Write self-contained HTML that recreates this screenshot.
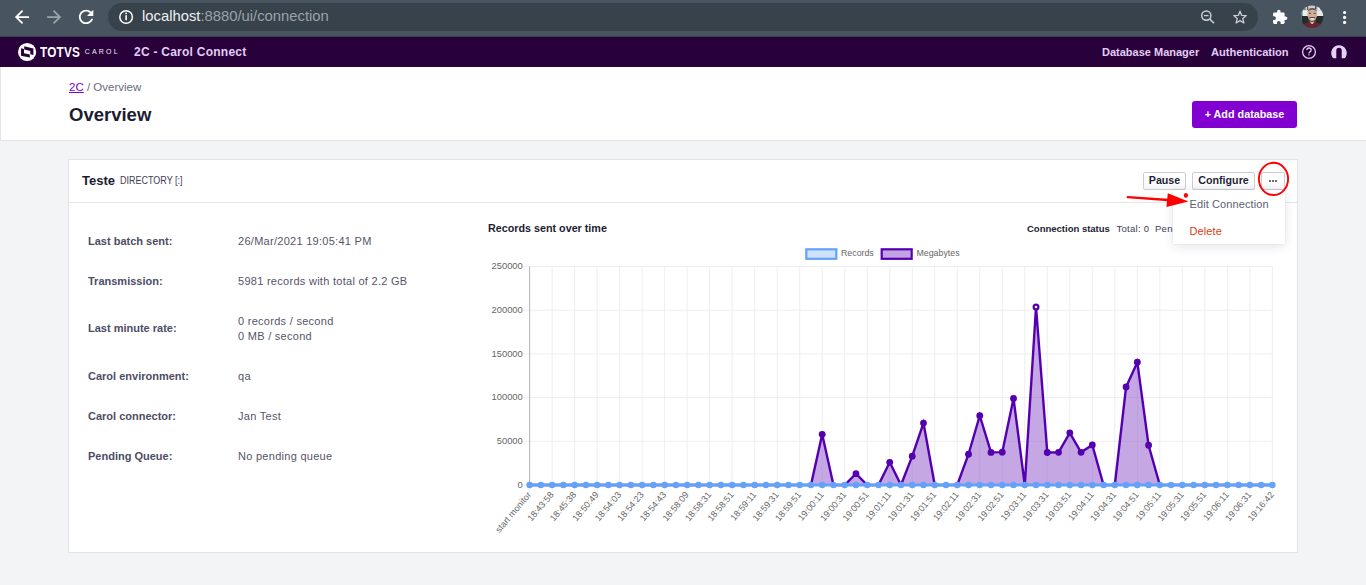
<!DOCTYPE html>
<html><head><meta charset="utf-8">
<style>
*{box-sizing:border-box;margin:0;padding:0}
html,body{width:1366px;height:585px;overflow:hidden;background:#f3f4f6;font-family:"Liberation Sans",sans-serif;position:relative}
.abs{position:absolute}
#chrome{left:0;top:0;width:1366px;height:37px;background:#485560;border-bottom:1px solid #34404a}
#pill{left:108px;top:3px;width:1150px;height:28px;border-radius:14px;background:#37424b}
#url{left:142px;top:7.8px;font-size:14.8px;color:#9aa3aa;white-space:nowrap;letter-spacing:0}
#url b{font-weight:normal;color:#eef0f1}
#nav{left:0;top:37px;width:1366px;height:30px;background:#28003a}
#header{left:0;top:67px;width:1366px;height:74px;background:#fff;border-bottom:1px solid #e3e3e8;border-left:1px solid #e3e3e8}
.crumb{left:69px;top:81px;font-size:11.5px;color:#6b6b80}
.crumb a{color:#7a00d6;text-decoration:underline}
.title{left:69px;top:104px;font-size:18.5px;font-weight:bold;color:#1c1c30}
.btn-add{left:1192px;top:101px;width:105px;height:27px;background:#8100d1;border-radius:3px;color:#fff;font-size:10.8px;font-weight:bold;text-align:center;line-height:27px}
#card{left:68px;top:159px;width:1230px;height:394px;background:#fff;border:1px solid #e3e3e8}
#cardhead{left:69px;top:160px;width:1228px;height:43px;border-bottom:1px solid #e6e6ea}
.name{left:82px;top:173px;font-size:13px;font-weight:bold;color:#1c1c30}
.dir{left:120px;top:175.1px;font-size:10px;color:#3d3d55;transform:scaleX(0.9);transform-origin:0 0;white-space:nowrap}
.btn{height:18px;border:1px solid #c9ced6;border-radius:2px;background:linear-gradient(#fff 60%,#f3f4f6);font-size:10.7px;font-weight:bold;color:#1f1f38;text-align:center;line-height:14px}
.lbl{left:88px;font-size:11px;font-weight:bold;color:#4d4d66}
.val{left:238px;font-size:11px;color:#555568;line-height:15px;letter-spacing:0.28px}
.chart{position:absolute;left:0;top:0}
.yl{font-family:"Liberation Sans",sans-serif;font-size:9.4px;fill:#666}
.xl{font-family:"Liberation Sans",sans-serif;font-size:9px;fill:#666}
.lg{font-family:"Liberation Sans",sans-serif;font-size:8.8px;fill:#666}
.ctitle{left:488px;top:222px;font-size:10.75px;font-weight:bold;color:#1c1c30}
.cstat{left:1027px;top:223px;font-size:9.5px;font-weight:bold;color:#1c1c30;white-space:nowrap}
.cstat span{font-weight:normal;color:#3d3d55;margin-left:6.5px;letter-spacing:0.3px}
#dd{left:1173px;top:190px;width:112px;height:54px;background:#fff;box-shadow:0 3px 10px rgba(30,40,70,0.11),0 0 2px rgba(30,40,70,0.08)}
.dd1{left:1189.5px;top:198px;font-size:11px;color:#5b6173;letter-spacing:0.1px}
.dd2{left:1189.5px;top:225px;font-size:11px;color:#e0380f;letter-spacing:0.1px}
.navt{top:46px;font-size:11.5px;font-weight:bold;color:#e3cdf5;white-space:nowrap}
</style></head><body>
<div class="abs" id="chrome"></div>
<div class="abs" id="pill"></div>
<div class="abs" id="url"><b>localhost</b>:8880/ui/connection</div>
<div class="abs" id="nav"></div>
<svg class="abs" style="left:0;top:0" width="1366" height="67" viewBox="0 0 1366 67">
<!-- back -->
<g transform="translate(14.9,10) scale(0.88) translate(-4,-4)"><path d="M20 11H7.83l5.59-5.59L12 4l-8 8 8 8 1.41-1.41L7.83 13H20v-2z" fill="#fff"/></g>
<g transform="translate(47.1,10) scale(0.88) translate(-4,-4)"><path d="M12 4l-1.41 1.41L16.17 11H4v2h12.17l-5.58 5.59L12 20l8-8z" fill="#9ba4ab"/></g>
<g transform="translate(78.9,9.7) scale(0.9) translate(-4,-4)"><path d="M17.65 6.35C16.2 4.9 14.21 4 12 4c-4.42 0-7.99 3.58-7.99 8s3.57 8 7.99 8c3.73 0 6.84-2.55 7.73-6h-2.08c-.82 2.33-3.04 4-5.65 4-3.31 0-6-2.69-6-6s2.69-6 6-6c1.66 0 3.14.69 4.22 1.78L13 11h7V4l-2.35 2.35z" fill="#fff"/></g>
<!-- info -->
<circle cx="126.1" cy="17" r="6.3" fill="none" stroke="#fff" stroke-width="1.5"/>
<rect x="125.3" y="15.2" width="1.6" height="5" fill="#fff"/>
<rect x="125.3" y="12.6" width="1.6" height="1.6" fill="#fff"/>
<!-- zoom out -->
<circle cx="1206.3" cy="15.6" r="4.6" fill="none" stroke="#c9cdd0" stroke-width="1.5"/>
<line x1="1209.6" y1="18.9" x2="1214" y2="23.3" stroke="#c9cdd0" stroke-width="1.6"/>
<line x1="1204" y1="15.6" x2="1208.6" y2="15.6" stroke="#c9cdd0" stroke-width="1.3"/>
<!-- star -->
<path d="M1240 11.2 L1241.7 15.4 L1246.3 15.6 L1242.8 18.6 L1243.9 23 L1240 20.6 L1236.1 23 L1237.2 18.6 L1233.7 15.6 L1238.3 15.4 Z" fill="none" stroke="#c9cdd0" stroke-width="1.3" stroke-linejoin="round"/>
<!-- puzzle -->
<g transform="translate(1271.7,9) scale(0.68)"><path d="M20.5 11H19V7c0-1.1-.9-2-2-2h-4V3.5C13 2.12 11.88 1 10.5 1S8 2.12 8 3.5V5H4c-1.1 0-1.99.9-1.99 2v3.8H3.5c1.49 0 2.7 1.21 2.7 2.7s-1.21 2.7-2.7 2.7H2V20c0 1.1.9 2 2 2h3.8v-1.5c0-1.49 1.21-2.7 2.7-2.7 1.49 0 2.7 1.21 2.7 2.7V22H17c1.1 0 2-.9 2-2v-4h1.5c1.38 0 2.5-1.12 2.5-2.5S21.88 11 20.5 11z" fill="#fff"/></g>
<!-- avatar -->
<defs><clipPath id="av"><circle cx="1312.05" cy="16.75" r="11.2"/></clipPath></defs>
<g clip-path="url(#av)">
<rect x="1300" y="5" width="25" height="24" fill="#3e4a4c"/>
<rect x="1300" y="5" width="25" height="6.5" fill="#c9d0cc"/>
<rect x="1304" y="5" width="1.5" height="5" fill="#4a8a7a"/><rect x="1307" y="5" width="1.2" height="5" fill="#a04050"/><rect x="1315" y="5" width="1.5" height="4" fill="#405080"/><rect x="1318" y="5" width="2" height="5" fill="#f0f0f0"/>
<rect x="1300" y="10.5" width="8.5" height="5.5" fill="#e9eeee"/>
<rect x="1316" y="10.5" width="9" height="5.5" fill="#e4e9e9"/>
<rect x="1300" y="11" width="2.5" height="12" fill="#4a7080"/>
<rect x="1302" y="16" width="6.5" height="9" fill="#262b2c"/>
<rect x="1316" y="16" width="8" height="9" fill="#24292a"/>
<rect x="1310.2" y="20" width="3.8" height="4" fill="#d8c4a8"/>
<ellipse cx="1312.3" cy="14.6" rx="4.8" ry="6.6" fill="#cfae98"/>
<path d="M1307.6 12.5 Q1307.5 8 1312.3 7.9 Q1317.1 8 1317 12.5 Q1316 9.7 1312.3 9.8 Q1308.6 9.7 1307.6 12.5 Z" fill="#6a5a50"/>
<rect x="1308.8" y="12.8" width="2.2" height="1" fill="#5a4a44"/><rect x="1313.6" y="12.8" width="2.2" height="1" fill="#5a4a44"/>
<path d="M1309 17.6 Q1312.3 16.4 1315.6 17.6 L1315.2 18.4 Q1312.3 17.6 1309.4 18.4 Z" fill="#4a3a34"/>
<ellipse cx="1312.3" cy="18.9" rx="2.2" ry="0.8" fill="#efe4de"/>
<path d="M1309 19.4 Q1312.3 22.6 1315.6 19.4 L1315.4 21 Q1312.3 23 1309.2 21 Z" fill="#5a4a40"/>
<path d="M1302 30 L1303.5 24.5 Q1306 22.3 1310.2 22.3 L1312.1 24.8 L1314.2 22.3 Q1318.6 22.3 1320.8 24.5 L1322 30 Z" fill="#6a2230"/>
</g>
<!-- menu dots -->
<circle cx="1344.6" cy="12.5" r="1.6" fill="#fff"/><circle cx="1344.6" cy="17.4" r="1.6" fill="#fff"/><circle cx="1344.6" cy="22.4" r="1.6" fill="#fff"/>
<!-- totvs logo -->
<circle cx="27.1" cy="52" r="9.1" fill="#fff"/>
<path d="M24.2 46.2 L33.4 48.4 L33.4 55 L30.3 54.3 L30.3 51 L24.2 49.5 Z" fill="#28003a"/>
<path d="M21 48.2 L24 48.9 L24 53.2 L29.8 54.5 L29.8 57.6 L21 55.8 Z" fill="#28003a"/>
<!-- help -->
<circle cx="1309" cy="52" r="6.4" fill="none" stroke="#e3cdf5" stroke-width="1.3"/>
<path d="M1306.9 50.1 Q1306.9 48 1309 48 Q1311.1 48 1311.1 50 Q1311.1 51.2 1309.9 51.8 Q1309 52.3 1309 53.4" fill="none" stroke="#e3cdf5" stroke-width="1.3"/>
<rect x="1308.3" y="54.3" width="1.4" height="1.1" fill="#e3cdf5"/>
<!-- user -->
<defs><clipPath id="uc"><rect x="1328" y="40" width="22" height="18.2"/></clipPath></defs>
<path clip-path="url(#uc)" fill-rule="evenodd" d="M1339 45.3 A7.8 7.8 0 1 1 1338.99 45.3 Z M1336.3 60 L1336.3 50.4 A2.7 2.7 0 0 1 1341.7 50.4 L1341.7 60 Z" fill="#e6d0f7"/>
</svg>
<div class="abs navt" style="left:40px;top:44.1px;font-size:14.5px;color:#fff;transform:scaleX(0.81);transform-origin:0 0;letter-spacing:0.3px">TOTVS</div>
<div class="abs navt" style="left:84.7px;top:48.2px;font-size:7px;font-weight:normal;color:#f4eef8;letter-spacing:2.2px">CAROL</div>
<div class="abs navt" style="left:134px;top:45.4px;font-size:12px;letter-spacing:0.25px">2C - Carol Connect</div>
<div class="abs navt" style="left:1102px;font-size:11px">Database Manager</div>
<div class="abs navt" style="left:1211px;font-size:11.1px">Authentication</div>
<div class="abs" id="header"></div>
<div class="abs crumb"><a>2C</a> / Overview</div>
<div class="abs title">Overview</div>
<div class="abs btn-add">+ Add database</div>
<div class="abs" id="card"></div>
<div class="abs" id="cardhead"></div>
<div class="abs name">Teste</div>
<div class="abs dir">DIRECTORY [:]</div>
<div class="abs btn" style="left:1143px;top:172px;width:43px">Pause</div>
<div class="abs btn" style="left:1192px;top:172px;width:63px">Configure</div>
<div class="abs btn" style="left:1261px;top:172px;width:24px"></div>
<div class="abs" style="left:1269.2px;top:179.8px;width:2px;height:2px;background:#6e6e78"></div><div class="abs" style="left:1272.2px;top:179.8px;width:2px;height:2px;background:#6e6e78"></div><div class="abs" style="left:1275.2px;top:179.8px;width:2px;height:2px;background:#6e6e78"></div>
<div class="abs lbl" style="top:235px">Last batch sent:</div>
<div class="abs val" style="top:234px">26/Mar/2021 19:05:41 PM</div>
<div class="abs lbl" style="top:275px">Transmission:</div>
<div class="abs val" style="top:274px">5981 records with total of 2.2 GB</div>
<div class="abs lbl" style="top:322px">Last minute rate:</div>
<div class="abs val" style="top:314px">0 records / second<br>0 MB / second</div>
<div class="abs lbl" style="top:370px">Carol environment:</div>
<div class="abs val" style="top:369px">qa</div>
<div class="abs lbl" style="top:410px">Carol connector:</div>
<div class="abs val" style="top:409px">Jan Test</div>
<div class="abs lbl" style="top:450px">Pending Queue:</div>
<div class="abs val" style="top:449px">No pending queue</div>
<div class="abs ctitle">Records sent over time</div>
<div class="abs cstat">Connection status<span>Total: 0</span><span style="margin-left:5.5px">Pending</span></div>
<svg class="chart" width="1366" height="585" viewBox="0 0 1366 585">
<line x1="522.5" y1="485.00" x2="1272.86" y2="485.00" stroke="#eeeeee" stroke-width="1"/>
<text x="522.8" y="487.80" text-anchor="end" class="yl">0</text>
<line x1="522.5" y1="441.30" x2="1272.86" y2="441.30" stroke="#eeeeee" stroke-width="1"/>
<text x="522.8" y="444.10" text-anchor="end" class="yl">50000</text>
<line x1="522.5" y1="397.60" x2="1272.86" y2="397.60" stroke="#eeeeee" stroke-width="1"/>
<text x="522.8" y="400.40" text-anchor="end" class="yl">100000</text>
<line x1="522.5" y1="353.90" x2="1272.86" y2="353.90" stroke="#eeeeee" stroke-width="1"/>
<text x="522.8" y="356.70" text-anchor="end" class="yl">150000</text>
<line x1="522.5" y1="310.20" x2="1272.86" y2="310.20" stroke="#eeeeee" stroke-width="1"/>
<text x="522.8" y="313.00" text-anchor="end" class="yl">200000</text>
<line x1="522.5" y1="266.50" x2="1272.86" y2="266.50" stroke="#eeeeee" stroke-width="1"/>
<text x="522.8" y="269.30" text-anchor="end" class="yl">250000</text>
<line x1="529.60" y1="266.50" x2="529.60" y2="485.0" stroke="#b4b4b4" stroke-width="1"/>
<line x1="529.60" y1="485.0" x2="529.60" y2="492.5" stroke="#f2f2f2" stroke-width="1"/>
<line x1="552.11" y1="266.50" x2="552.11" y2="485.0" stroke="#eeeeee" stroke-width="1"/>
<line x1="552.11" y1="485.0" x2="552.11" y2="492.5" stroke="#f2f2f2" stroke-width="1"/>
<line x1="574.62" y1="266.50" x2="574.62" y2="485.0" stroke="#eeeeee" stroke-width="1"/>
<line x1="574.62" y1="485.0" x2="574.62" y2="492.5" stroke="#f2f2f2" stroke-width="1"/>
<line x1="597.12" y1="266.50" x2="597.12" y2="485.0" stroke="#eeeeee" stroke-width="1"/>
<line x1="597.12" y1="485.0" x2="597.12" y2="492.5" stroke="#f2f2f2" stroke-width="1"/>
<line x1="619.63" y1="266.50" x2="619.63" y2="485.0" stroke="#eeeeee" stroke-width="1"/>
<line x1="619.63" y1="485.0" x2="619.63" y2="492.5" stroke="#f2f2f2" stroke-width="1"/>
<line x1="642.14" y1="266.50" x2="642.14" y2="485.0" stroke="#eeeeee" stroke-width="1"/>
<line x1="642.14" y1="485.0" x2="642.14" y2="492.5" stroke="#f2f2f2" stroke-width="1"/>
<line x1="664.65" y1="266.50" x2="664.65" y2="485.0" stroke="#eeeeee" stroke-width="1"/>
<line x1="664.65" y1="485.0" x2="664.65" y2="492.5" stroke="#f2f2f2" stroke-width="1"/>
<line x1="687.16" y1="266.50" x2="687.16" y2="485.0" stroke="#eeeeee" stroke-width="1"/>
<line x1="687.16" y1="485.0" x2="687.16" y2="492.5" stroke="#f2f2f2" stroke-width="1"/>
<line x1="709.66" y1="266.50" x2="709.66" y2="485.0" stroke="#eeeeee" stroke-width="1"/>
<line x1="709.66" y1="485.0" x2="709.66" y2="492.5" stroke="#f2f2f2" stroke-width="1"/>
<line x1="732.17" y1="266.50" x2="732.17" y2="485.0" stroke="#eeeeee" stroke-width="1"/>
<line x1="732.17" y1="485.0" x2="732.17" y2="492.5" stroke="#f2f2f2" stroke-width="1"/>
<line x1="754.68" y1="266.50" x2="754.68" y2="485.0" stroke="#eeeeee" stroke-width="1"/>
<line x1="754.68" y1="485.0" x2="754.68" y2="492.5" stroke="#f2f2f2" stroke-width="1"/>
<line x1="777.19" y1="266.50" x2="777.19" y2="485.0" stroke="#eeeeee" stroke-width="1"/>
<line x1="777.19" y1="485.0" x2="777.19" y2="492.5" stroke="#f2f2f2" stroke-width="1"/>
<line x1="799.70" y1="266.50" x2="799.70" y2="485.0" stroke="#eeeeee" stroke-width="1"/>
<line x1="799.70" y1="485.0" x2="799.70" y2="492.5" stroke="#f2f2f2" stroke-width="1"/>
<line x1="822.20" y1="266.50" x2="822.20" y2="485.0" stroke="#eeeeee" stroke-width="1"/>
<line x1="822.20" y1="485.0" x2="822.20" y2="492.5" stroke="#f2f2f2" stroke-width="1"/>
<line x1="844.71" y1="266.50" x2="844.71" y2="485.0" stroke="#eeeeee" stroke-width="1"/>
<line x1="844.71" y1="485.0" x2="844.71" y2="492.5" stroke="#f2f2f2" stroke-width="1"/>
<line x1="867.22" y1="266.50" x2="867.22" y2="485.0" stroke="#eeeeee" stroke-width="1"/>
<line x1="867.22" y1="485.0" x2="867.22" y2="492.5" stroke="#f2f2f2" stroke-width="1"/>
<line x1="889.73" y1="266.50" x2="889.73" y2="485.0" stroke="#eeeeee" stroke-width="1"/>
<line x1="889.73" y1="485.0" x2="889.73" y2="492.5" stroke="#f2f2f2" stroke-width="1"/>
<line x1="912.24" y1="266.50" x2="912.24" y2="485.0" stroke="#eeeeee" stroke-width="1"/>
<line x1="912.24" y1="485.0" x2="912.24" y2="492.5" stroke="#f2f2f2" stroke-width="1"/>
<line x1="934.74" y1="266.50" x2="934.74" y2="485.0" stroke="#eeeeee" stroke-width="1"/>
<line x1="934.74" y1="485.0" x2="934.74" y2="492.5" stroke="#f2f2f2" stroke-width="1"/>
<line x1="957.25" y1="266.50" x2="957.25" y2="485.0" stroke="#eeeeee" stroke-width="1"/>
<line x1="957.25" y1="485.0" x2="957.25" y2="492.5" stroke="#f2f2f2" stroke-width="1"/>
<line x1="979.76" y1="266.50" x2="979.76" y2="485.0" stroke="#eeeeee" stroke-width="1"/>
<line x1="979.76" y1="485.0" x2="979.76" y2="492.5" stroke="#f2f2f2" stroke-width="1"/>
<line x1="1002.27" y1="266.50" x2="1002.27" y2="485.0" stroke="#eeeeee" stroke-width="1"/>
<line x1="1002.27" y1="485.0" x2="1002.27" y2="492.5" stroke="#f2f2f2" stroke-width="1"/>
<line x1="1024.78" y1="266.50" x2="1024.78" y2="485.0" stroke="#eeeeee" stroke-width="1"/>
<line x1="1024.78" y1="485.0" x2="1024.78" y2="492.5" stroke="#f2f2f2" stroke-width="1"/>
<line x1="1047.28" y1="266.50" x2="1047.28" y2="485.0" stroke="#eeeeee" stroke-width="1"/>
<line x1="1047.28" y1="485.0" x2="1047.28" y2="492.5" stroke="#f2f2f2" stroke-width="1"/>
<line x1="1069.79" y1="266.50" x2="1069.79" y2="485.0" stroke="#eeeeee" stroke-width="1"/>
<line x1="1069.79" y1="485.0" x2="1069.79" y2="492.5" stroke="#f2f2f2" stroke-width="1"/>
<line x1="1092.30" y1="266.50" x2="1092.30" y2="485.0" stroke="#eeeeee" stroke-width="1"/>
<line x1="1092.30" y1="485.0" x2="1092.30" y2="492.5" stroke="#f2f2f2" stroke-width="1"/>
<line x1="1114.81" y1="266.50" x2="1114.81" y2="485.0" stroke="#eeeeee" stroke-width="1"/>
<line x1="1114.81" y1="485.0" x2="1114.81" y2="492.5" stroke="#f2f2f2" stroke-width="1"/>
<line x1="1137.32" y1="266.50" x2="1137.32" y2="485.0" stroke="#eeeeee" stroke-width="1"/>
<line x1="1137.32" y1="485.0" x2="1137.32" y2="492.5" stroke="#f2f2f2" stroke-width="1"/>
<line x1="1159.82" y1="266.50" x2="1159.82" y2="485.0" stroke="#eeeeee" stroke-width="1"/>
<line x1="1159.82" y1="485.0" x2="1159.82" y2="492.5" stroke="#f2f2f2" stroke-width="1"/>
<line x1="1182.33" y1="266.50" x2="1182.33" y2="485.0" stroke="#eeeeee" stroke-width="1"/>
<line x1="1182.33" y1="485.0" x2="1182.33" y2="492.5" stroke="#f2f2f2" stroke-width="1"/>
<line x1="1204.84" y1="266.50" x2="1204.84" y2="485.0" stroke="#eeeeee" stroke-width="1"/>
<line x1="1204.84" y1="485.0" x2="1204.84" y2="492.5" stroke="#f2f2f2" stroke-width="1"/>
<line x1="1227.35" y1="266.50" x2="1227.35" y2="485.0" stroke="#eeeeee" stroke-width="1"/>
<line x1="1227.35" y1="485.0" x2="1227.35" y2="492.5" stroke="#f2f2f2" stroke-width="1"/>
<line x1="1249.86" y1="266.50" x2="1249.86" y2="485.0" stroke="#eeeeee" stroke-width="1"/>
<line x1="1249.86" y1="485.0" x2="1249.86" y2="492.5" stroke="#f2f2f2" stroke-width="1"/>
<line x1="1272.36" y1="266.50" x2="1272.36" y2="485.0" stroke="#eeeeee" stroke-width="1"/>
<line x1="1272.36" y1="485.0" x2="1272.36" y2="492.5" stroke="#f2f2f2" stroke-width="1"/>
<path d="M529.60,485.00 L540.85,485.00 L552.11,485.00 L563.36,485.00 L574.62,485.00 L585.87,485.00 L597.12,485.00 L608.38,485.00 L619.63,485.00 L630.89,485.00 L642.14,485.00 L653.39,485.00 L664.65,485.00 L675.90,485.00 L687.16,485.00 L698.41,485.00 L709.66,485.00 L720.92,485.00 L732.17,485.00 L743.43,485.00 L754.68,485.00 L765.93,485.00 L777.19,485.00 L788.44,485.00 L799.70,485.00 L810.95,485.00 L822.20,434.31 L833.46,485.00 L844.71,485.00 L855.97,473.64 L867.22,485.00 L878.47,485.00 L889.73,462.28 L900.98,485.00 L912.24,456.16 L923.49,423.03 L934.74,485.00 L946.00,485.00 L957.25,485.00 L968.51,454.24 L979.76,415.69 L991.01,452.40 L1002.27,452.14 L1013.52,398.39 L1024.78,485.00 L1036.03,306.97 L1047.28,452.49 L1058.54,452.31 L1069.79,432.82 L1081.05,452.31 L1092.30,444.88 L1103.55,485.00 L1114.81,485.00 L1126.06,387.02 L1137.32,362.20 L1148.57,445.23 L1159.82,485.00 L1171.08,485.00 L1182.33,485.00 L1193.59,485.00 L1204.84,485.00 L1216.09,485.00 L1227.35,485.00 L1238.60,485.00 L1249.86,485.00 L1261.11,485.00 L1272.36,485.00 L1272.36,485.0 L529.60,485.0 Z" fill="rgba(140,80,200,0.5)" stroke="none"/>
<path d="M529.60,485.00 L540.85,485.00 L552.11,485.00 L563.36,485.00 L574.62,485.00 L585.87,485.00 L597.12,485.00 L608.38,485.00 L619.63,485.00 L630.89,485.00 L642.14,485.00 L653.39,485.00 L664.65,485.00 L675.90,485.00 L687.16,485.00 L698.41,485.00 L709.66,485.00 L720.92,485.00 L732.17,485.00 L743.43,485.00 L754.68,485.00 L765.93,485.00 L777.19,485.00 L788.44,485.00 L799.70,485.00 L810.95,485.00 L822.20,434.31 L833.46,485.00 L844.71,485.00 L855.97,473.64 L867.22,485.00 L878.47,485.00 L889.73,462.28 L900.98,485.00 L912.24,456.16 L923.49,423.03 L934.74,485.00 L946.00,485.00 L957.25,485.00 L968.51,454.24 L979.76,415.69 L991.01,452.40 L1002.27,452.14 L1013.52,398.39 L1024.78,485.00 L1036.03,306.97 L1047.28,452.49 L1058.54,452.31 L1069.79,432.82 L1081.05,452.31 L1092.30,444.88 L1103.55,485.00 L1114.81,485.00 L1126.06,387.02 L1137.32,362.20 L1148.57,445.23 L1159.82,485.00 L1171.08,485.00 L1182.33,485.00 L1193.59,485.00 L1204.84,485.00 L1216.09,485.00 L1227.35,485.00 L1238.60,485.00 L1249.86,485.00 L1261.11,485.00 L1272.36,485.00" fill="none" stroke="#5400b0" stroke-width="2.4" stroke-linejoin="miter"/>
<circle cx="822.20" cy="434.31" r="3.4" fill="#5400b0"/>
<circle cx="855.97" cy="473.64" r="3.4" fill="#5400b0"/>
<circle cx="889.73" cy="462.28" r="3.4" fill="#5400b0"/>
<circle cx="912.24" cy="456.16" r="3.4" fill="#5400b0"/>
<circle cx="923.49" cy="423.03" r="3.4" fill="#5400b0"/>
<circle cx="968.51" cy="454.24" r="3.4" fill="#5400b0"/>
<circle cx="979.76" cy="415.69" r="3.4" fill="#5400b0"/>
<circle cx="991.01" cy="452.40" r="3.4" fill="#5400b0"/>
<circle cx="1002.27" cy="452.14" r="3.4" fill="#5400b0"/>
<circle cx="1013.52" cy="398.39" r="3.4" fill="#5400b0"/>
<circle cx="1036.03" cy="306.97" r="2.4" fill="#fff" stroke="#5400b0" stroke-width="2.2"/>
<circle cx="1047.28" cy="452.49" r="3.4" fill="#5400b0"/>
<circle cx="1058.54" cy="452.31" r="3.4" fill="#5400b0"/>
<circle cx="1069.79" cy="432.82" r="3.4" fill="#5400b0"/>
<circle cx="1081.05" cy="452.31" r="3.4" fill="#5400b0"/>
<circle cx="1092.30" cy="444.88" r="3.4" fill="#5400b0"/>
<circle cx="1126.06" cy="387.02" r="3.4" fill="#5400b0"/>
<circle cx="1137.32" cy="362.20" r="3.4" fill="#5400b0"/>
<circle cx="1148.57" cy="445.23" r="3.4" fill="#5400b0"/>
<line x1="529.60" y1="485.0" x2="1272.36" y2="485.0" stroke="#64a2fa" stroke-width="3"/>
<circle cx="529.60" cy="485.0" r="3.25" fill="#64a2fa"/>
<circle cx="540.85" cy="485.0" r="3.25" fill="#64a2fa"/>
<circle cx="552.11" cy="485.0" r="3.25" fill="#64a2fa"/>
<circle cx="563.36" cy="485.0" r="3.25" fill="#64a2fa"/>
<circle cx="574.62" cy="485.0" r="3.25" fill="#64a2fa"/>
<circle cx="585.87" cy="485.0" r="3.25" fill="#64a2fa"/>
<circle cx="597.12" cy="485.0" r="3.25" fill="#64a2fa"/>
<circle cx="608.38" cy="485.0" r="3.25" fill="#64a2fa"/>
<circle cx="619.63" cy="485.0" r="3.25" fill="#64a2fa"/>
<circle cx="630.89" cy="485.0" r="3.25" fill="#64a2fa"/>
<circle cx="642.14" cy="485.0" r="3.25" fill="#64a2fa"/>
<circle cx="653.39" cy="485.0" r="3.25" fill="#64a2fa"/>
<circle cx="664.65" cy="485.0" r="3.25" fill="#64a2fa"/>
<circle cx="675.90" cy="485.0" r="3.25" fill="#64a2fa"/>
<circle cx="687.16" cy="485.0" r="3.25" fill="#64a2fa"/>
<circle cx="698.41" cy="485.0" r="3.25" fill="#64a2fa"/>
<circle cx="709.66" cy="485.0" r="3.25" fill="#64a2fa"/>
<circle cx="720.92" cy="485.0" r="3.25" fill="#64a2fa"/>
<circle cx="732.17" cy="485.0" r="3.25" fill="#64a2fa"/>
<circle cx="743.43" cy="485.0" r="3.25" fill="#64a2fa"/>
<circle cx="754.68" cy="485.0" r="3.25" fill="#64a2fa"/>
<circle cx="765.93" cy="485.0" r="3.25" fill="#64a2fa"/>
<circle cx="777.19" cy="485.0" r="3.25" fill="#64a2fa"/>
<circle cx="788.44" cy="485.0" r="3.25" fill="#64a2fa"/>
<circle cx="799.70" cy="485.0" r="3.25" fill="#64a2fa"/>
<circle cx="810.95" cy="485.0" r="3.25" fill="#64a2fa"/>
<circle cx="822.20" cy="485.0" r="3.25" fill="#64a2fa"/>
<circle cx="833.46" cy="485.0" r="3.25" fill="#64a2fa"/>
<circle cx="844.71" cy="485.0" r="3.25" fill="#64a2fa"/>
<circle cx="855.97" cy="485.0" r="3.25" fill="#64a2fa"/>
<circle cx="867.22" cy="485.0" r="3.25" fill="#64a2fa"/>
<circle cx="878.47" cy="485.0" r="3.25" fill="#64a2fa"/>
<circle cx="889.73" cy="485.0" r="3.25" fill="#64a2fa"/>
<circle cx="900.98" cy="485.0" r="3.25" fill="#64a2fa"/>
<circle cx="912.24" cy="485.0" r="3.25" fill="#64a2fa"/>
<circle cx="923.49" cy="485.0" r="3.25" fill="#64a2fa"/>
<circle cx="934.74" cy="485.0" r="3.25" fill="#64a2fa"/>
<circle cx="946.00" cy="485.0" r="3.25" fill="#64a2fa"/>
<circle cx="957.25" cy="485.0" r="3.25" fill="#64a2fa"/>
<circle cx="968.51" cy="485.0" r="3.25" fill="#64a2fa"/>
<circle cx="979.76" cy="485.0" r="3.25" fill="#64a2fa"/>
<circle cx="991.01" cy="485.0" r="3.25" fill="#64a2fa"/>
<circle cx="1002.27" cy="485.0" r="3.25" fill="#64a2fa"/>
<circle cx="1013.52" cy="485.0" r="3.25" fill="#64a2fa"/>
<circle cx="1024.78" cy="485.0" r="3.25" fill="#64a2fa"/>
<circle cx="1036.03" cy="485.0" r="3.25" fill="#64a2fa"/>
<circle cx="1047.28" cy="485.0" r="3.25" fill="#64a2fa"/>
<circle cx="1058.54" cy="485.0" r="3.25" fill="#64a2fa"/>
<circle cx="1069.79" cy="485.0" r="3.25" fill="#64a2fa"/>
<circle cx="1081.05" cy="485.0" r="3.25" fill="#64a2fa"/>
<circle cx="1092.30" cy="485.0" r="3.25" fill="#64a2fa"/>
<circle cx="1103.55" cy="485.0" r="3.25" fill="#64a2fa"/>
<circle cx="1114.81" cy="485.0" r="3.25" fill="#64a2fa"/>
<circle cx="1126.06" cy="485.0" r="3.25" fill="#64a2fa"/>
<circle cx="1137.32" cy="485.0" r="3.25" fill="#64a2fa"/>
<circle cx="1148.57" cy="485.0" r="3.25" fill="#64a2fa"/>
<circle cx="1159.82" cy="485.0" r="3.25" fill="#64a2fa"/>
<circle cx="1171.08" cy="485.0" r="3.25" fill="#64a2fa"/>
<circle cx="1182.33" cy="485.0" r="3.25" fill="#64a2fa"/>
<circle cx="1193.59" cy="485.0" r="3.25" fill="#64a2fa"/>
<circle cx="1204.84" cy="485.0" r="3.25" fill="#64a2fa"/>
<circle cx="1216.09" cy="485.0" r="3.25" fill="#64a2fa"/>
<circle cx="1227.35" cy="485.0" r="3.25" fill="#64a2fa"/>
<circle cx="1238.60" cy="485.0" r="3.25" fill="#64a2fa"/>
<circle cx="1249.86" cy="485.0" r="3.25" fill="#64a2fa"/>
<circle cx="1261.11" cy="485.0" r="3.25" fill="#64a2fa"/>
<circle cx="1272.36" cy="485.0" r="3.25" fill="#64a2fa"/>
<text transform="translate(531.60,495) rotate(-50)" text-anchor="end" class="xl">start monitor</text>
<text transform="translate(554.11,495) rotate(-50)" text-anchor="end" class="xl">18:43:58</text>
<text transform="translate(576.62,495) rotate(-50)" text-anchor="end" class="xl">18:45:38</text>
<text transform="translate(599.12,495) rotate(-50)" text-anchor="end" class="xl">18:50:49</text>
<text transform="translate(621.63,495) rotate(-50)" text-anchor="end" class="xl">18:54:03</text>
<text transform="translate(644.14,495) rotate(-50)" text-anchor="end" class="xl">18:54:23</text>
<text transform="translate(666.65,495) rotate(-50)" text-anchor="end" class="xl">18:54:43</text>
<text transform="translate(689.16,495) rotate(-50)" text-anchor="end" class="xl">18:58:09</text>
<text transform="translate(711.66,495) rotate(-50)" text-anchor="end" class="xl">18:58:31</text>
<text transform="translate(734.17,495) rotate(-50)" text-anchor="end" class="xl">18:58:51</text>
<text transform="translate(756.68,495) rotate(-50)" text-anchor="end" class="xl">18:59:11</text>
<text transform="translate(779.19,495) rotate(-50)" text-anchor="end" class="xl">18:59:31</text>
<text transform="translate(801.70,495) rotate(-50)" text-anchor="end" class="xl">18:59:51</text>
<text transform="translate(824.20,495) rotate(-50)" text-anchor="end" class="xl">19:00:11</text>
<text transform="translate(846.71,495) rotate(-50)" text-anchor="end" class="xl">19:00:31</text>
<text transform="translate(869.22,495) rotate(-50)" text-anchor="end" class="xl">19:00:51</text>
<text transform="translate(891.73,495) rotate(-50)" text-anchor="end" class="xl">19:01:11</text>
<text transform="translate(914.24,495) rotate(-50)" text-anchor="end" class="xl">19:01:31</text>
<text transform="translate(936.74,495) rotate(-50)" text-anchor="end" class="xl">19:01:51</text>
<text transform="translate(959.25,495) rotate(-50)" text-anchor="end" class="xl">19:02:11</text>
<text transform="translate(981.76,495) rotate(-50)" text-anchor="end" class="xl">19:02:31</text>
<text transform="translate(1004.27,495) rotate(-50)" text-anchor="end" class="xl">19:02:51</text>
<text transform="translate(1026.78,495) rotate(-50)" text-anchor="end" class="xl">19:03:11</text>
<text transform="translate(1049.28,495) rotate(-50)" text-anchor="end" class="xl">19:03:31</text>
<text transform="translate(1071.79,495) rotate(-50)" text-anchor="end" class="xl">19:03:51</text>
<text transform="translate(1094.30,495) rotate(-50)" text-anchor="end" class="xl">19:04:11</text>
<text transform="translate(1116.81,495) rotate(-50)" text-anchor="end" class="xl">19:04:31</text>
<text transform="translate(1139.32,495) rotate(-50)" text-anchor="end" class="xl">19:04:51</text>
<text transform="translate(1161.82,495) rotate(-50)" text-anchor="end" class="xl">19:05:11</text>
<text transform="translate(1184.33,495) rotate(-50)" text-anchor="end" class="xl">19:05:31</text>
<text transform="translate(1206.84,495) rotate(-50)" text-anchor="end" class="xl">19:05:51</text>
<text transform="translate(1229.35,495) rotate(-50)" text-anchor="end" class="xl">19:06:11</text>
<text transform="translate(1251.86,495) rotate(-50)" text-anchor="end" class="xl">19:06:31</text>
<text transform="translate(1274.36,495) rotate(-50)" text-anchor="end" class="xl">19:16:42</text>
<rect x="806.3" y="249.3" width="30" height="9.5" fill="#cfe2fd" stroke="#64a2fa" stroke-width="2.2"/>
<text x="841" y="256" class="lg">Records</text>
<rect x="881.7" y="249.3" width="30" height="9.5" fill="#c3a3e3" stroke="#5400b0" stroke-width="2.2"/>
<text x="916.5" y="256" class="lg">Megabytes</text>
</svg>
<div class="abs" id="dd"></div>
<div class="abs dd1">Edit Connection</div>
<div class="abs dd2">Delete</div>
<svg class="abs" style="left:0;top:0" width="1366" height="585" viewBox="0 0 1366 585">
<ellipse cx="1273.5" cy="178.9" rx="14.6" ry="16.1" fill="none" stroke="#ff0000" stroke-width="1.9"/>
<line x1="1127.8" y1="197.1" x2="1168" y2="200" stroke="#ff0000" stroke-width="2.3" stroke-linecap="round"/>
<polygon points="1167.8,193.2 1188.4,201.5 1166.4,207" fill="#ff0000"/>
<ellipse cx="1185.9" cy="195.4" rx="2.1" ry="2.4" fill="#ff0000"/>
</svg>
</body></html>
